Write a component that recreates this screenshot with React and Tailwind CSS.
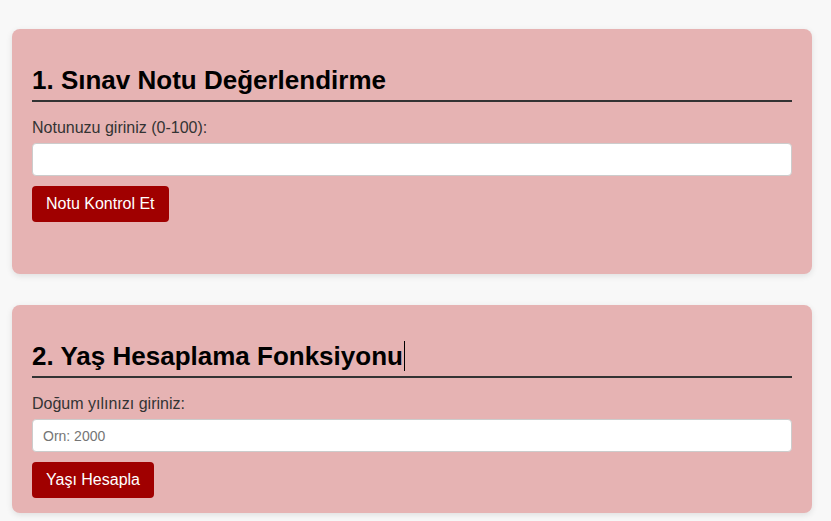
import React from 'react';

function Card({ title, label, placeholder, button, caret, bottom }) {
  return (
    <section className={`w-[800px] rounded-lg bg-[#e6b3b3] px-5 pt-[36px] shadow-[0_2px_6px_rgba(0,0,0,0.1)] ${bottom}`}>
      <h2 className="border-b-2 border-[#333] pb-[5px] text-[26px] font-bold leading-[30px] text-black">
        {title}
        {caret && <span className="ml-px inline-block h-[30px] w-px bg-black align-top" />}
      </h2>
      <label className="mt-[17px] block text-[16px] leading-[18px] text-[#333]">{label}</label>
      <input
        type="text"
        placeholder={placeholder}
        className="mt-[6px] block h-[33px] w-full rounded border border-[#ccc] bg-white px-[10px] text-[14px] placeholder:text-[#757575] outline-none"
      />
      <button className="mt-[10px] h-9 rounded bg-[#a00000] px-[14px] text-[16px] leading-[18px] text-white">
        {button}
      </button>
    </section>
  );
}

export default function App() {
  return (
    <div className="min-h-[521px] bg-[#f8f8f8] pl-3 pt-[29px] font-['Liberation_Sans',Arial,sans-serif]">
      <div className="flex flex-col gap-[31px]">
        <Card
          title="1. Sınav Notu Değerlendirme"
          label="Notunuzu giriniz (0-100):"
          placeholder=""
          button="Notu Kontrol Et"
          bottom="pb-[52px]"
        />
        <Card
          title="2. Yaş Hesaplama Fonksiyonu"
          label="Doğum yılınızı giriniz:"
          placeholder="Orn: 2000"
          button="Yaşı Hesapla"
          caret
          bottom="pb-[15px]"
        />
      </div>
    </div>
  );
}
